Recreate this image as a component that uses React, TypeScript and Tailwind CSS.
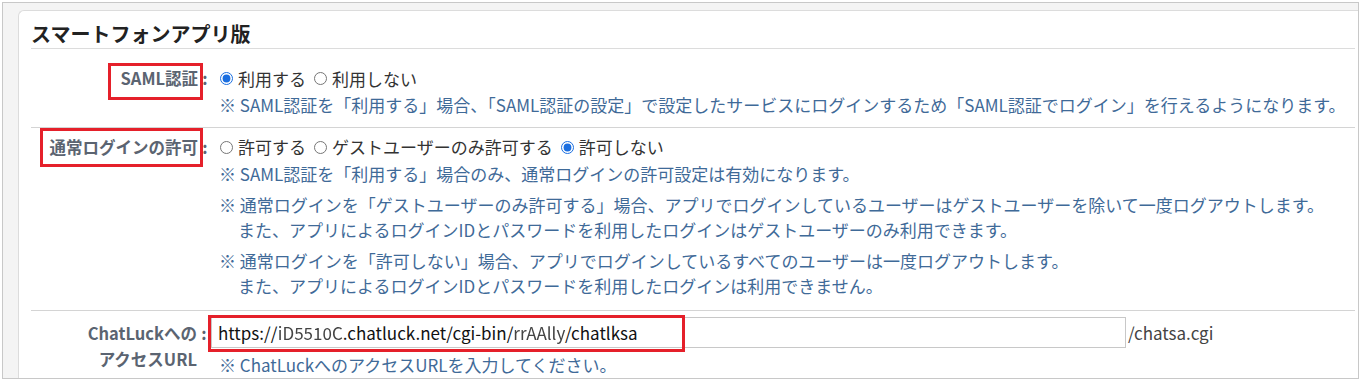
import React from 'react'

const font = { fontFamily: '"Noto Sans CJK JP", "Noto Sans", sans-serif' }

function Label({ lines, tight }: { lines: string[]; tight?: boolean }) {
  return (
    <div className={tight ? 'flex justify-end' : 'flex justify-end pr-[7px]'}>
      <div className="text-right font-bold text-[16.5px] leading-[26px] text-[#5b6471]">
        {lines.map((l, i) => (
          <div key={i}>{l}</div>
        ))}
      </div>
      <span className="w-[14px] text-center font-bold text-[16.5px] leading-[26px] text-[#5b6471]">:</span>
    </div>
  )
}

function Radio({ label, checked }: { label: string; checked?: boolean }) {
  return (
    <label className="inline-flex items-center mr-[7px]">
      <input
        type="radio"
        defaultChecked={checked}
        className="w-[13px] h-[13px] m-0 ml-[1px] mr-[5px] accent-[#1a6ee0]"
      />
      <span>{label}</span>
    </label>
  )
}

function Note({ children }: { children: React.ReactNode }) {
  return <div className="text-[#3f6a98] text-[17px] leading-[25px] pl-[19px] -indent-[19px]">{children}</div>
}

export default function App() {
  return (
    <div className="w-[1363px] h-[382px] bg-white pt-[2px] pl-[2px]" style={font}>
      <div className="w-[1357px] h-[377px] border border-[#c8c8c8] bg-[#f4f4f4] pl-[15px] pt-[7px] overflow-hidden">
        <div className="h-[400px] bg-white border-l border-t border-[#dcdcdc] rounded-tl-[6px] pl-[12px] pr-[3px]">
          <h2 className="pt-[8px] h-[38px] text-[20px] leading-[30px] font-bold text-[#222] border-b border-[#dcdcdc]">
            スマートフォンアプリ版
          </h2>

          {/* SAML認証 */}
          <div className="grid grid-cols-[188px_1fr] border-b border-[#d4d4d4] pt-[16px] pb-[10px]">
            <div className="relative">
              <div className="absolute left-[77px] top-[-2px] w-[95px] h-[37px] border-[3px] border-[#e5202a]" />
              <Label lines={['SAML認証']} />
            </div>
            <div className="text-[17px] text-[#333]">
              <div className="leading-[26px]">
                <Radio label="利用する" checked />
                <Radio label="利用しない" />
              </div>
              <Note>※ SAML認証を「利用する」場合、「SAML認証の設定」で設定したサービスにログインするため「SAML認証でログイン」を行えるようになります。</Note>
            </div>
          </div>

          {/* 通常ログイン */}
          <div className="grid grid-cols-[188px_1fr] border-b border-[#d4d4d4] pt-[6px] pb-[12px]">
            <div className="relative">
              <div className="absolute left-[9px] top-[-6px] w-[163px] h-[39px] border-[3px] border-[#e5202a]" />
              <Label lines={['通常ログインの許可']} />
            </div>
            <div className="text-[17px] text-[#333]">
              <div className="leading-[26px]">
                <Radio label="許可する" />
                <Radio label="ゲストユーザーのみ許可する" />
                <Radio label="許可しない" checked />
              </div>
              <div className="flex flex-col gap-[6px] mt-[1px]">
                <Note>※ SAML認証を「利用する」場合のみ、通常ログインの許可設定は有効になります。</Note>
                <Note>
                  ※ 通常ログインを「ゲストユーザーのみ許可する」場合、アプリでログインしているユーザーはゲストユーザーを除いて一度ログアウトします。
                  <br />
                  また、アプリによるログインIDとパスワードを利用したログインはゲストユーザーのみ利用できます。
                </Note>
                <Note>
                  ※ 通常ログインを「許可しない」場合、アプリでログインしているすべてのユーザーは一度ログアウトします。
                  <br />
                  また、アプリによるログインIDとパスワードを利用したログインは利用できません。
                </Note>
              </div>
            </div>
          </div>

          {/* アクセスURL */}
          <div className="grid grid-cols-[180px_1fr] pt-[6px]">
            <div className="pt-[3px]">
              <Label lines={['ChatLuckへの', 'アクセスURL']} tight />
            </div>
            <div className="text-[17px] text-[#333]">
              <div className="flex items-center">
                <div className="relative w-[915px] h-[31px] border border-[#c8c8c8] bg-white flex items-center pl-[6px]">
                  <div className="absolute left-[-4px] top-[-3px] w-[477px] h-[37px] border-[3px] border-[#e5202a]" />
                  <span className="text-[#111] whitespace-nowrap">
                    https://
                    <span className="blur-[0.7px] text-[#444]">iD5510C</span>
                    .chatluck.net/cgi-bin/
                    <span className="blur-[0.7px] text-[#444]">rrAAlly</span>
                    /chatlksa
                  </span>
                </div>
                <span className="ml-[2px] text-[#444]">/chatsa.cgi</span>
              </div>
              <div className="mt-[4px] ml-[8px]">
                <Note>※ ChatLuckへのアクセスURLを入力してください。</Note>
              </div>
            </div>
          </div>
        </div>
      </div>
    </div>
  )
}
